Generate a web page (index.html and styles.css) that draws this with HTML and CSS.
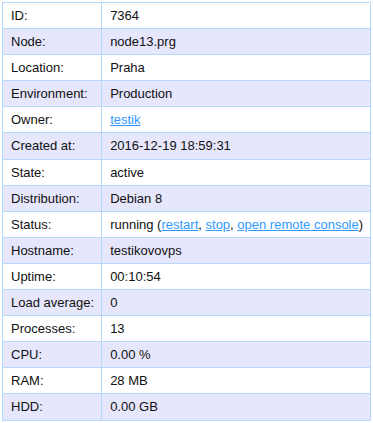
FILE: index.html
```html
<!DOCTYPE html>
<html lang="en">
  <head>
    <meta charset="utf-8">
    <title>VPS 7364</title>
    <link rel="stylesheet" href="styles.css">
  </head>
  <body>
    <table class="details">
      <tr><th>ID:</th><td>7364</td></tr>
      <tr><th>Node:</th><td>node13.prg</td></tr>
      <tr><th>Location:</th><td>Praha</td></tr>
      <tr><th>Environment:</th><td>Production</td></tr>
      <tr><th>Owner:</th><td><a href="#">testik</a></td></tr>
      <tr><th>Created at:</th><td>2016-12-19 18:59:31</td></tr>
      <tr><th>State:</th><td>active</td></tr>
      <tr><th>Distribution:</th><td>Debian 8</td></tr>
      <tr><th>Status:</th><td>running (<a href="#">restart</a>, <a href="#">stop</a>, <a href="#">open remote console</a>)</td></tr>
      <tr><th>Hostname:</th><td>testikovovps</td></tr>
      <tr><th>Uptime:</th><td>00:10:54</td></tr>
      <tr><th>Load average:</th><td>0</td></tr>
      <tr><th>Processes:</th><td>13</td></tr>
      <tr><th>CPU:</th><td>0.00 %</td></tr>
      <tr><th>RAM:</th><td>28 MB</td></tr>
      <tr><th>HDD:</th><td>0.00 GB</td></tr>
    </table>
  </body>
</html>
```

FILE: styles.css
```css
body {
  margin: 2px;
  font-family: "Liberation Sans", Arial, sans-serif;
  font-size: 13px;
  color: #111;
  background: #fff;
}

.details {
  border-collapse: collapse;
  width: 369px;
}
.details th,
.details td {
  border: 1px solid #b5d9fb;
  padding: 5px 7px 5px 8px;
  line-height: 15.1px;
  text-align: left;
  font-weight: normal;
  white-space: nowrap;
}
.details th {
  width: 83px;
}
.details tr:nth-child(even) {
  background: #e6e6fc;
}

.details a {
  color: #3399ff;
}
```
